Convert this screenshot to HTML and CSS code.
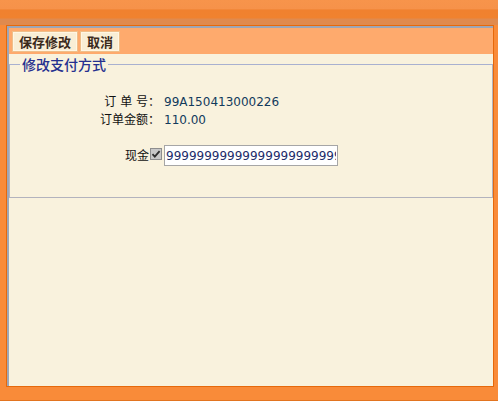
FILE: index.html
```html
<!DOCTYPE html>
<html lang="zh-CN">
<head>
  <meta charset="UTF-8">
  <title>修改支付方式</title>
  <link rel="stylesheet" href="styles.css">
</head>
<body>
  <div class="window">
    <div class="titlebar"></div>
    <div class="panel">
      <div class="inner">
        <div class="toolbar">
          <button class="btn">保存修改</button>
          <button class="btn">取消</button>
        </div>
        <div class="content">
          <fieldset class="box">
            <legend>修改支付方式</legend>
            <div class="form">
              <div class="label">订 单 号：</div>
              <div class="value">99A150413000226</div>
              <div class="label">订单金额：</div>
              <div class="value">110.00</div>
              <div class="label pay">现金<span class="check"><svg width="12" height="12" viewBox="0 0 12 12"><rect x="0.5" y="0.5" width="11" height="11" fill="#c8c8c8" stroke="#8e8e8e"/><path d="M2.5 6.2 L4.8 8.6 L9.6 3.2" fill="none" stroke="#2e2e2e" stroke-width="1.8"/></svg></span></div>
              <div class="value"><input class="amount" type="text" value="999999999999999999999999999999"></div>
            </div>
          </fieldset>
        </div>
      </div>
    </div>
  </div>
</body>
</html>
```

FILE: styles.css
```css
body {
  margin: 0;
  font-family: "DejaVu Sans", "Noto Sans CJK SC", sans-serif;
  font-size: 12px;
}
.window {
  width: 498px;
  height: 401px;
  box-sizing: border-box;
  background: #f98b39;
  padding: 0 4px 13px 6px;
  display: flex;
  flex-direction: column;
  border-bottom: 1px solid #e27420;
}
.titlebar {
  height: 25px;
  margin: 0 -4px 0 -6px;
  background: linear-gradient(#f7944b 0, #f6924a 35%, #f0812f 40%, #f0822f 72%, #e08a4e 76%, #e08a4e 100%);
}
.panel {
  flex: 1;
  border: 1px solid #e6690c;
  display: flex;
}
.inner {
  flex: 1;
  border-top: 2px solid #9ea6b6;
  border-left: 2px solid #9ea6b6;
  display: flex;
  flex-direction: column;
  background: #f9f2dd;
}
.toolbar {
  height: 26px;
  box-sizing: border-box;
  background: #feaa6d;
  padding: 3px 0 0 3px;
  display: flex;
  gap: 2px;
}
.btn {
  height: 21px;
  padding: 0 6px;
  border: 1px solid #efbf8a;
  box-shadow: inset 0 0 0 1px #fff6e4;
  background: #f9eed5;
  font-family: "Noto Sans CJK SC", sans-serif;
  font-size: 13px;
  font-weight: bold;
  color: #3b2a1c;
  line-height: 19px;
}
.content { flex: 1; }
.box {
  margin: 0;
  padding: 0 10px 31px;
  border: 1px solid #b3b3bd;
  border-top-color: #a9b1d0;
}
.box legend {
  margin-left: 0;
  padding: 0 2px;
  font-family: "Noto Sans CJK SC", sans-serif;
  font-size: 14px;
  font-weight: 500;
  line-height: 20px;
  color: #26308f;
}
.form {
  display: grid;
  grid-template-columns: 140px 1fr;
  column-gap: 4px;
  padding-top: 19px;
  line-height: 18px;
}
.label {
  text-align: right;
  color: #111;
}
.value { color: #123a5c; }
.pay {
  margin-top: 16px;
  display: flex;
  justify-content: flex-end;
  align-items: center;
  gap: 1px;
}
.pay + .value { margin-top: 16px; }
.check { display: flex; margin-right: -2px; margin-top: -4px; }
.amount {
  box-sizing: border-box;
  width: 174px;
  height: 21px;
  margin: 0;
  padding: 0 1px;
  border: 1px solid #a6a6a6;
  background: #fff;
  font-family: "DejaVu Sans", sans-serif;
  font-size: 12px;
  color: #1c2c6a;
  display: block;
}
```
